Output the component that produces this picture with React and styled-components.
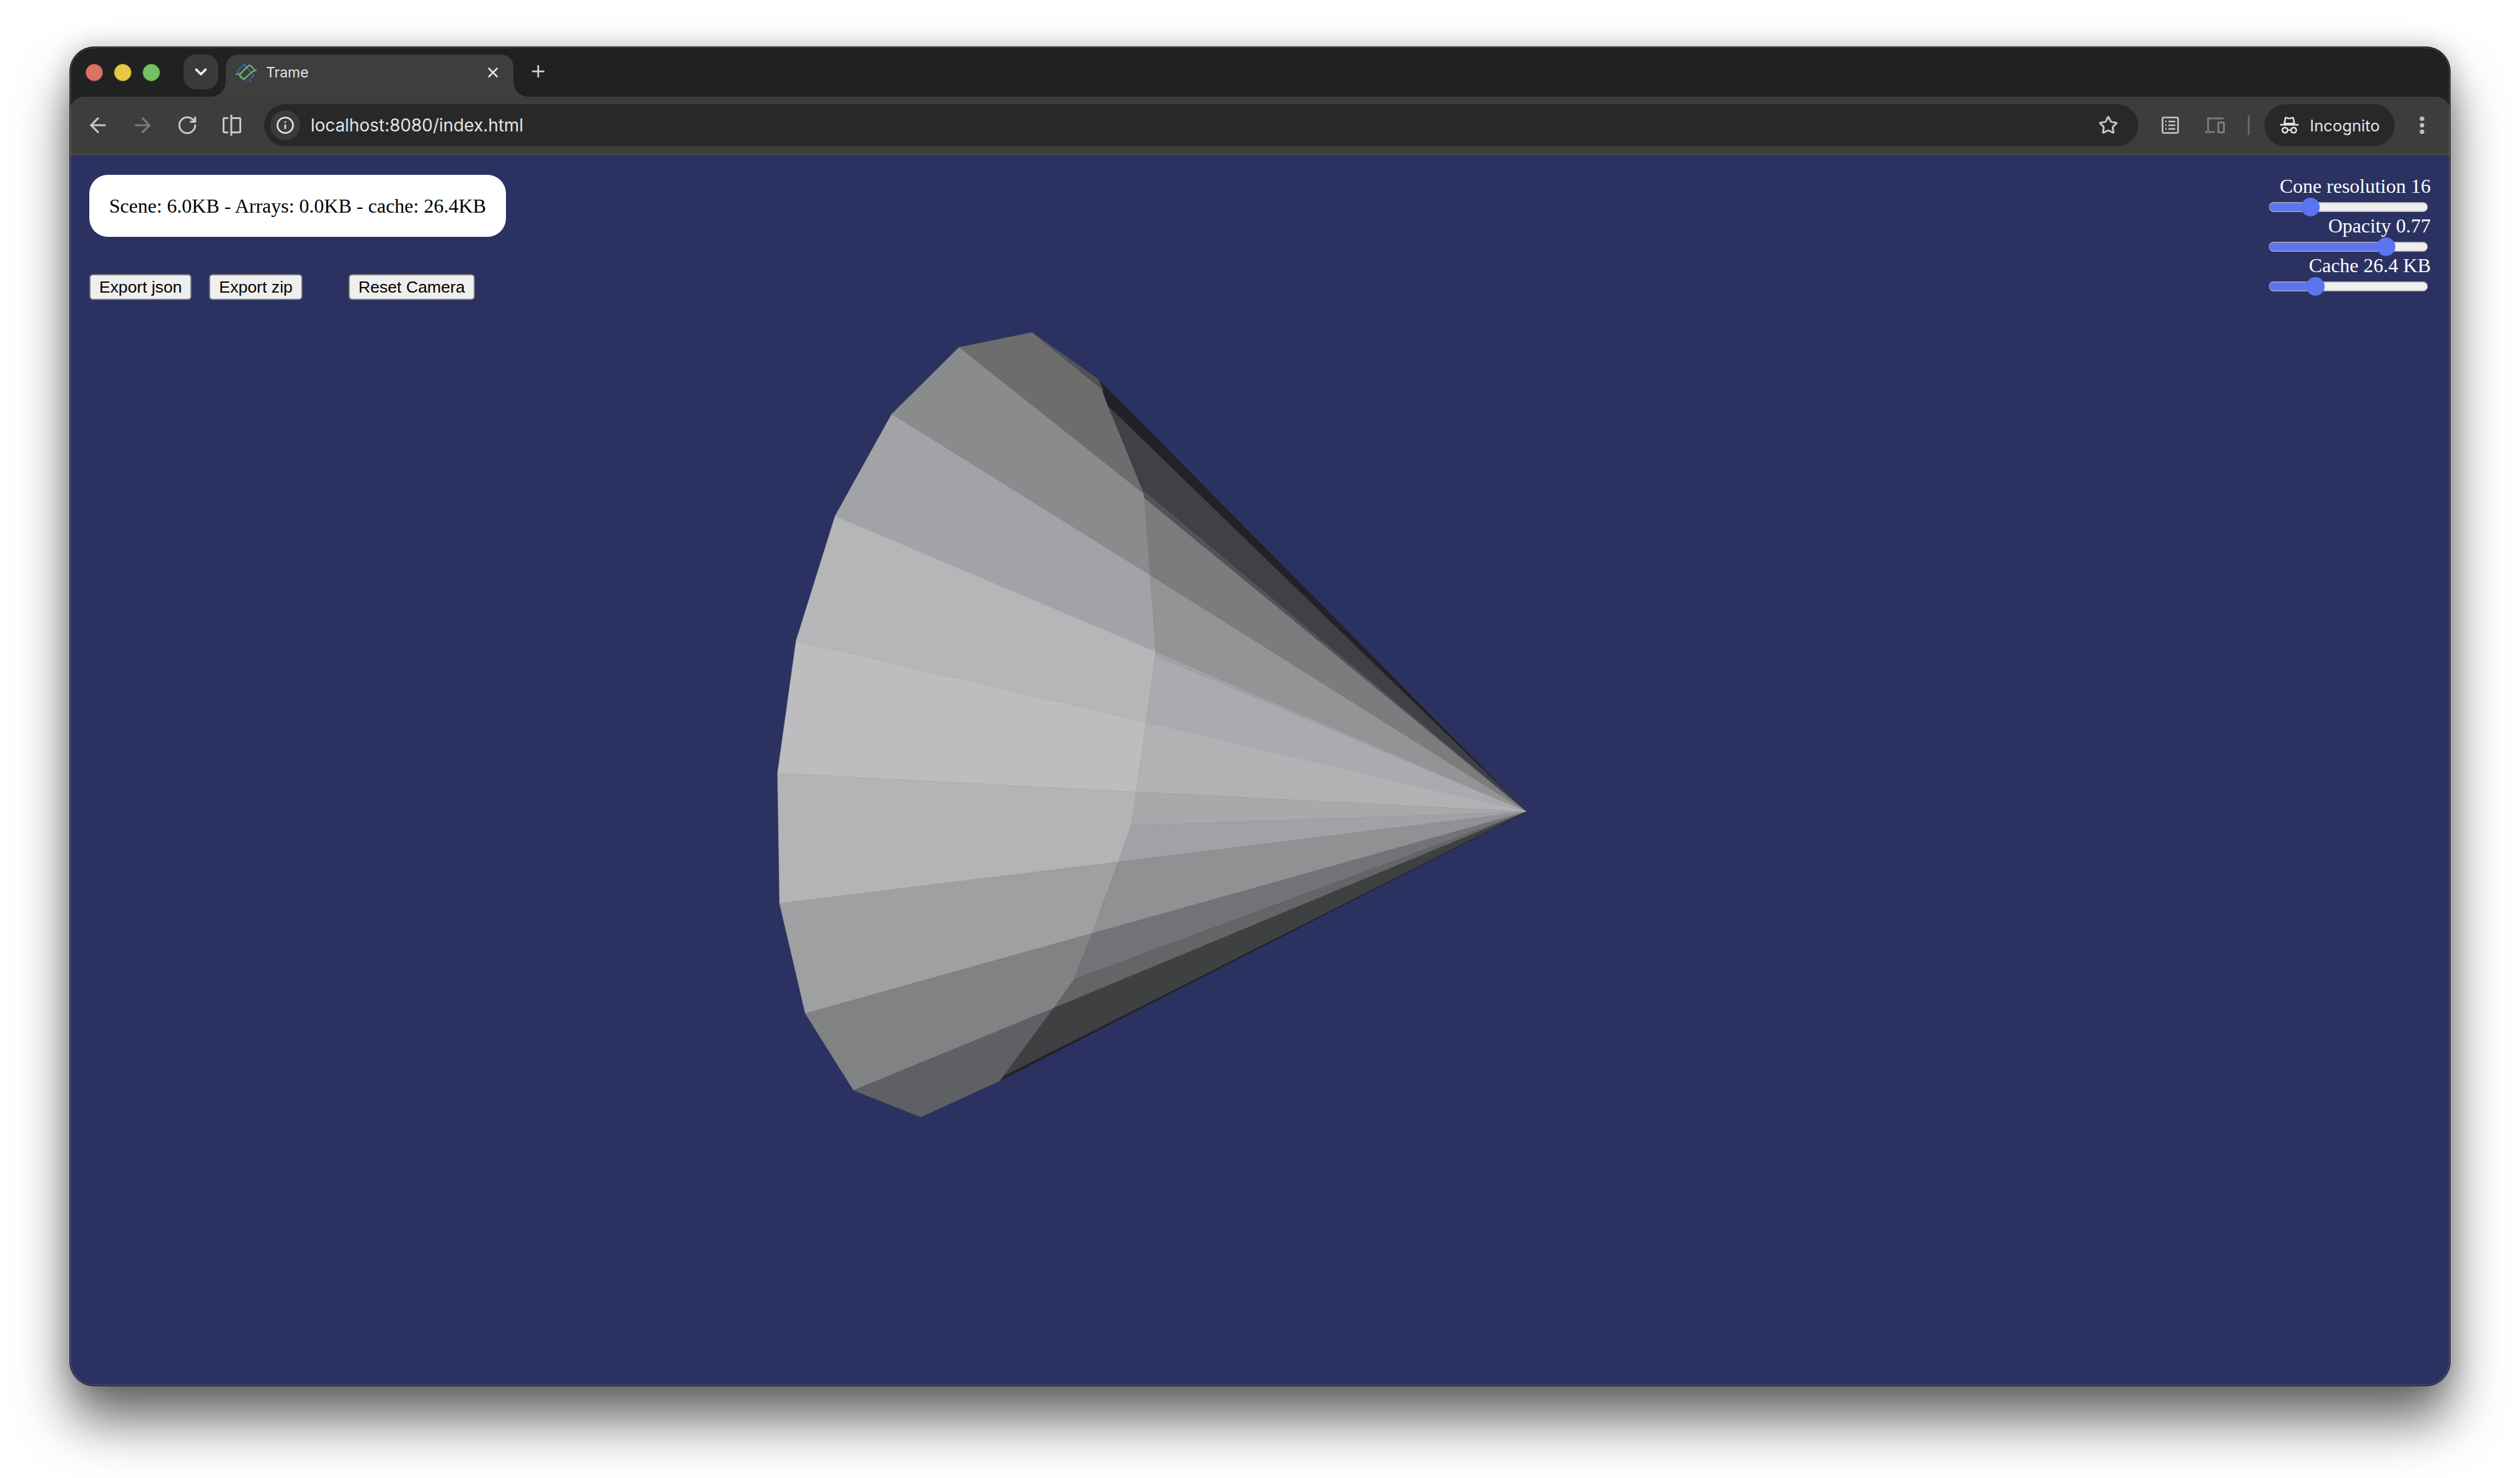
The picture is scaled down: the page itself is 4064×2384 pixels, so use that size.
import {useState} from 'react';
import styled, {createGlobalStyle} from 'styled-components';
import {ArrowLeft, ArrowRight, ChevronDown, EllipsisVertical, Info, Plus, RotateCw, Star, X} from 'lucide-react';

const rim = {
  p0: '560,42', p1: '418,70', p2: '287,195', p3: '177,386', p4: '101,620', p5: '65,868',
  p6: '69,1112', p7: '119,1318', p8: '213,1462', p9: '344,1512', b10: '498,1444',
};
const apex = '1522,940';

// cone faces, drawn flat with the colours of the render
const faces = [
  [`${rim.p0} ${rim.p1} 778,345 708,180 689,130`, '#6d6d6e'],
  [`${rim.p1} ${rim.p2} 790,497 778,345`, '#8a8b8c'],
  [`${rim.p2} ${rim.p3} 801,640 790,497`, '#a2a3a6'],
  [`${rim.p3} ${rim.p4} 782,772 801,640`, '#b6b6b8'],
  [`${rim.p4} ${rim.p5} 763,903 782,772`, '#bdbdbf'],
  [`${rim.p5} ${rim.p6} 728,1034 753,966 763,903`, '#b4b4b6'],
  [`${rim.p6} ${rim.p7} 677,1168 728,1034`, '#9ea0a1'],
  [`${rim.p7} ${rim.p8} 602,1308 642,1254 677,1168`, '#808284'],
  [`${rim.p8} ${rim.p9} ${rim.b10} 602,1308`, '#5f6063'],
  [`689,130 ${apex} 708,180`, '#212226'],
  [`708,180 ${apex} 777,338`, '#404145'],
  [`777,338 ${apex} 778,352`, '#535457'],
  [`778,352 ${apex} 790,497`, '#7b7c7e'],
  [`790,497 ${apex} 801,640`, '#939496'],
  [`801,640 ${apex} 800,648`, '#a0a1a3'],
  [`800,648 ${apex} 782,772`, '#aaabaf'],
  [`782,772 ${apex} 763,903`, '#b1b2b4'],
  [`763,903 ${apex} 753,966`, '#a9a9ab'],
  [`753,966 ${apex} 728,1034`, '#a1a2a5'],
  [`728,1034 ${apex} 677,1168`, '#919193'],
  [`677,1168 ${apex} 642,1254`, '#727376'],
  [`642,1254 ${apex} 602,1308`, '#646567'],
  [`602,1308 ${apex} 504,1436`, '#3f4042'],
  [`504,1436 ${apex} ${rim.b10}`, '#232428'],
  [`${rim.p0} 689,130 700,152`, '#505153'],
];

const GlobalStyle = createGlobalStyle`
  html, body {
    margin: 0;
    background: #fff;
  }
`;

const Screen = styled.div`
  box-sizing: border-box;
  width: 4064px;
  height: 2384px;
  padding: 75px 112px 148px;
  display: flex;
  background: #fff;
`;

const BrowserWindow = styled.div`
  position: relative;
  flex: 1;
  display: flex;
  flex-direction: column;
  border-radius: 40px;
  overflow: hidden;
  background: #202221;
  font-family: Inter, "Liberation Sans", sans-serif;
`;

const WindowShadow = styled.div`
  flex: 1;
  display: flex;
  border-radius: 40px;
  box-shadow: 0 56px 84px rgba(0, 0, 0, 0.58), 0 0 40px rgba(0, 0, 0, 0.2);
`;

const WindowEdge = styled.div`
  position: absolute;
  inset: 0;
  border-radius: 40px;
  border: 1px solid #111;
  box-shadow: inset 0 0 0 1.5px rgba(255, 255, 255, 0.16);
  pointer-events: none;
`;

const TabStrip = styled.div`
  height: 81px;
  flex: none;
  display: flex;
  align-items: flex-end;
  padding-left: 26px;
`;

const Lights = styled.div`
  display: flex;
  gap: 18px;
  align-self: flex-start;
  margin-top: 28px;
`;

const Light = styled.span`
  width: 28px;
  height: 28px;
  border-radius: 50%;
  box-sizing: border-box;
  background: ${(p) => p.$color};
  border: 1px solid ${(p) => p.$rim};
`;

const TabSearch = styled.div`
  width: 56px;
  height: 56px;
  margin: 0 12px 12px 38px;
  border-radius: 20px;
  background: #3b3b3b;
  color: #f0f0f0;
  display: flex;
  align-items: center;
  justify-content: center;
`;

const Tab = styled.div`
  position: relative;
  box-sizing: border-box;
  width: 464px;
  height: 68px;
  padding: 0 20px 10px 16px;
  display: flex;
  align-items: center;
  border-radius: 20px 20px 0 0;
  background: #3e3e3e;
  color: #e3e3e3;

  &::before,
  &::after {
    content: '';
    position: absolute;
    bottom: 0;
    width: 24px;
    height: 24px;
  }
  &::before {
    left: -24px;
    background: radial-gradient(circle at 0 0, transparent 23.5px, #3e3e3e 24.5px);
  }
  &::after {
    right: -24px;
    background: radial-gradient(circle at 100% 0, transparent 23.5px, #3e3e3e 24.5px);
  }
`;

const TabTitle = styled.span`
  margin-left: 15px;
  flex: 1;
  font-size: 23px;
`;

const NewTab = styled.div`
  align-self: flex-start;
  margin: 25px 0 0 25px;
  color: #d0d0d0;
  display: flex;
`;

const Toolbar = styled.div`
  height: 94px;
  flex: none;
  box-sizing: border-box;
  padding: 12px 10px 0;
  display: flex;
  align-items: flex-start;
  background: #3d3d3d;
  border-radius: 24px 24px 0 0;
  border-bottom: 2px solid #4b4b4b;
`;

const ToolButton = styled.div`
  width: 72px;
  height: 68px;
  flex: none;
  display: flex;
  align-items: center;
  justify-content: center;
  color: ${(p) => (p.$dim ? '#7c7c7c' : '#c8c8c8')};
  margin-left: ${(p) => p.$gap || 0}px;
`;

const Omnibox = styled.div`
  flex: 1;
  height: 68px;
  margin-left: 16px;
  padding: 0 32px 0 10px;
  display: flex;
  align-items: center;
  border-radius: 34px;
  background: #282828;
  color: #e3e3e3;
`;

const InfoChip = styled.div`
  width: 48px;
  height: 48px;
  border-radius: 50%;
  background: #3b3b3b;
  display: flex;
  align-items: center;
  justify-content: center;
  color: #e3e3e3;
`;

const Url = styled.span`
  margin-left: 17px;
  font-size: 27.9px;
  flex: 1;
`;

const BookmarkStar = styled(Star)`
  color: #c8c8c8;
`;

const Divider = styled.span`
  width: 3px;
  height: 32px;
  margin: 18px 24px 0 17px;
  flex: none;
  background: #666;
`;

const IncognitoPill = styled.div`
  height: 68px;
  flex: none;
  box-sizing: border-box;
  width: 210px;
  padding-left: 25px;
  display: flex;
  align-items: center;
  gap: 18px;
  border-radius: 34px;
  background: #282828;
  color: #e3e3e3;
  font-size: 25.7px;
`;

const Viewport = styled.div`
  position: relative;
  flex: 1;
  padding: 32px;
  display: flex;
  justify-content: space-between;
  align-items: flex-start;
  background: #2b3261;
  font-family: "Liberation Serif", "Times New Roman", serif;
  font-size: 32px;
`;

const ConeView = styled.svg`
  position: absolute;
  left: 1088px;
  top: 250px;
  width: 1300px;
  height: 1350px;
`;

const LeftColumn = styled.div`
  position: relative;
`;

const StatsPanel = styled.div`
  box-sizing: border-box;
  width: 672px;
  height: 100px;
  padding: 0 32px;
  display: flex;
  align-items: center;
  border-radius: 30px;
  background: #fff;
  color: #000;
  white-space: nowrap;
`;

const ButtonRow = styled.div`
  display: flex;
  margin-top: 60px;
`;

const PageButton = styled.button`
  height: 42px;
  padding: 0 14px;
  margin: 0 ${(p) => p.$after || 0}px 0 0;
  box-sizing: border-box;
  background: #efefef;
  border: 2px solid #767676;
  border-radius: 6px;
  color: #000;
  font-family: "Liberation Sans", Arial, sans-serif;
  font-size: 26.67px;
  white-space: nowrap;
`;

const Controls = styled.div`
  position: relative;
  display: flex;
  flex-direction: column;
  align-items: flex-end;
  color: #fff;
`;

const ControlLabel = styled.label`
  line-height: 36.8px;
  height: 36.8px;
`;

const Range = styled.input`
  appearance: none;
  display: block;
  width: 256px;
  height: 30px;
  margin: 0 5px -2.8px 0;
  background: transparent;

  &::-webkit-slider-runnable-track {
    height: 16px;
    border-radius: 8px;
    box-shadow: inset 0 -1.5px 0 #a9a9a9, inset 0 1.5px 0 #a9a9a9;
    background: linear-gradient(to right, #5b74f0 ${(p) => p.$fill}px, #efefef ${(p) => p.$fill}px);
  }
  &::-webkit-slider-thumb {
    appearance: none;
    width: 30px;
    height: 30px;
    margin-top: -7px;
    border-radius: 50%;
    background: #5b74f0;
  }
`;

function Control({label, unit, min, max, step, start}) {
  const [value, setValue] = useState(start);
  const fill = 15 + ((value - min) / (max - min)) * 226;
  return (
    <>
      <ControlLabel>
        {label} {value}
        {unit}
      </ControlLabel>
      <Range
        type="range"
        min={min}
        max={max}
        step={step}
        value={value}
        $fill={fill}
        onChange={(e) => setValue(Number(e.target.value))}
      />
    </>
  );
}

function TrameIcon() {
  return (
    <svg width="34" height="34" viewBox="0 0 32 32" fill="none" strokeWidth="2" strokeLinecap="round">
      <g stroke="#3f5fb5">
        <path d="M4 16 Q3 13 5 11 L10 6 Q12 4 14 6 L26 18 Q28 20 26 22 L24 24" />
        <path d="M4 16 L16 28 M13 3 L15 5 M21 26 L23 29" />
      </g>
      <g stroke="#74b85f">
        <path d="M28 13 Q28 11 26 9 L23 6 Q21 4 19 6 L7 18 Q5 20 7 22 L10 25 Q12 27 14 25 L26 14" />
        <path d="M1 19 L4 18 M28 14 L31 12" />
      </g>
    </svg>
  );
}

function SplitIcon() {
  return (
    <svg width="30" height="34" viewBox="0 0 30 34" fill="none" stroke="currentColor" strokeWidth="3">
      <path d="M9 5.5 H3 A1.5 1.5 0 0 0 1.5 7 V27 A1.5 1.5 0 0 0 3 28.5 H9" />
      <path d="M15 5.5 H27 A1.5 1.5 0 0 1 28.5 7 V27 A1.5 1.5 0 0 1 27 28.5 H15" />
      <path d="M14 0 V34" />
    </svg>
  );
}

function ReaderIcon() {
  return (
    <svg width="28" height="28" viewBox="0 0 28 28" fill="none" stroke="currentColor" strokeWidth="2.6">
      <rect x="1.5" y="1.5" width="25" height="25" rx="2" />
      <path d="M11 8 H22 M11 14 H22 M11 20 H22" />
      <path d="M6 8 H8 M6 14 H8 M6 20 H8" />
    </svg>
  );
}

function DevicesIcon() {
  return (
    <svg width="32" height="26" viewBox="0 0 32 26" fill="none" stroke="currentColor" strokeWidth="3">
      <path d="M5 22 V2 H30" />
      <path d="M0 24 H16" />
      <rect x="21.5" y="8.5" width="9" height="16" rx="1" />
    </svg>
  );
}

function IncognitoIcon() {
  return (
    <svg width="30" height="28" viewBox="0 0 30 28" fill="currentColor">
      <path d="M5.5 12 L7.5 2 Q8 0 10 0.5 L15 2 L20 0.5 Q22 0 22.5 2 L24.5 12 Z M8.5 10 H21.5 L20 3 L15 4.5 L10 3 Z" fillRule="evenodd" />
      <rect x="0" y="12" width="30" height="2.5" />
      <path d="M8 16.5 A5.5 5.5 0 1 0 8.01 16.5 Z M8 19 A3 3 0 1 1 7.99 19 Z" fillRule="evenodd" />
      <path d="M22 16.5 A5.5 5.5 0 1 0 22.01 16.5 Z M22 19 A3 3 0 1 1 21.99 19 Z" fillRule="evenodd" />
      <rect x="12.5" y="20.5" width="5" height="2.2" />
    </svg>
  );
}

export default function App() {
  return (
    <Screen>
      <GlobalStyle />
      <WindowShadow>
        <BrowserWindow>
          <TabStrip>
            <Lights>
              <Light $color="#dc7264" $rim="#b8503f" />
              <Light $color="#e6c943" $rim="#c4a52c" />
              <Light $color="#76c064" $rim="#58a046" />
            </Lights>
            <TabSearch>
              <ChevronDown size={30} strokeWidth={3} />
            </TabSearch>
            <Tab>
              <TrameIcon />
              <TabTitle>Trame</TabTitle>
              <X size={26} strokeWidth={2.4} />
            </Tab>
            <NewTab>
              <Plus size={30} strokeWidth={2.2} />
            </NewTab>
          </TabStrip>
          <Toolbar>
            <ToolButton>
              <ArrowLeft size={38} strokeWidth={2} />
            </ToolButton>
            <ToolButton $dim>
              <ArrowRight size={38} strokeWidth={2} />
            </ToolButton>
            <ToolButton>
              <RotateCw size={34} strokeWidth={2.2} />
            </ToolButton>
            <ToolButton>
              <SplitIcon />
            </ToolButton>
            <Omnibox>
              <InfoChip>
                <Info size={30} strokeWidth={2.2} />
              </InfoChip>
              <Url>localhost:8080/index.html</Url>
              <BookmarkStar size={32} strokeWidth={2.2} />
            </Omnibox>
            <ToolButton $gap={16}>
              <ReaderIcon />
            </ToolButton>
            <ToolButton $dim>
              <DevicesIcon />
            </ToolButton>
            <Divider />
            <IncognitoPill>
              <IncognitoIcon />
              Incognito
            </IncognitoPill>
            <ToolButton $gap={8}>
              <EllipsisVertical size={36} strokeWidth={2.8} />
            </ToolButton>
          </Toolbar>
          <Viewport>
            <ConeView viewBox="0 0 1568 1568" preserveAspectRatio="none">
              {faces.map(([points, color]) => (
                <polygon key={points} points={points} fill={color} stroke={color} strokeWidth="0.5" />
              ))}
            </ConeView>
            <LeftColumn>
              <StatsPanel>Scene: 6.0KB - Arrays: 0.0KB - cache: 26.4KB</StatsPanel>
              <ButtonRow>
                <PageButton $after={28}>Export json</PageButton>
                <PageButton $after={74}>Export zip</PageButton>
                <PageButton>Reset Camera</PageButton>
              </ButtonRow>
            </LeftColumn>
            <Controls>
              <Control label="Cone resolution" min={3} max={60} step={1} start={16} />
              <Control label="Opacity" min={0} max={1} step={0.01} start={0.77} />
              <Control label="Cache" unit=" KB" min={0} max={100} step={0.1} start={26.4} />
            </Controls>
          </Viewport>
          <WindowEdge />
        </BrowserWindow>
      </WindowShadow>
    </Screen>
  );
}
